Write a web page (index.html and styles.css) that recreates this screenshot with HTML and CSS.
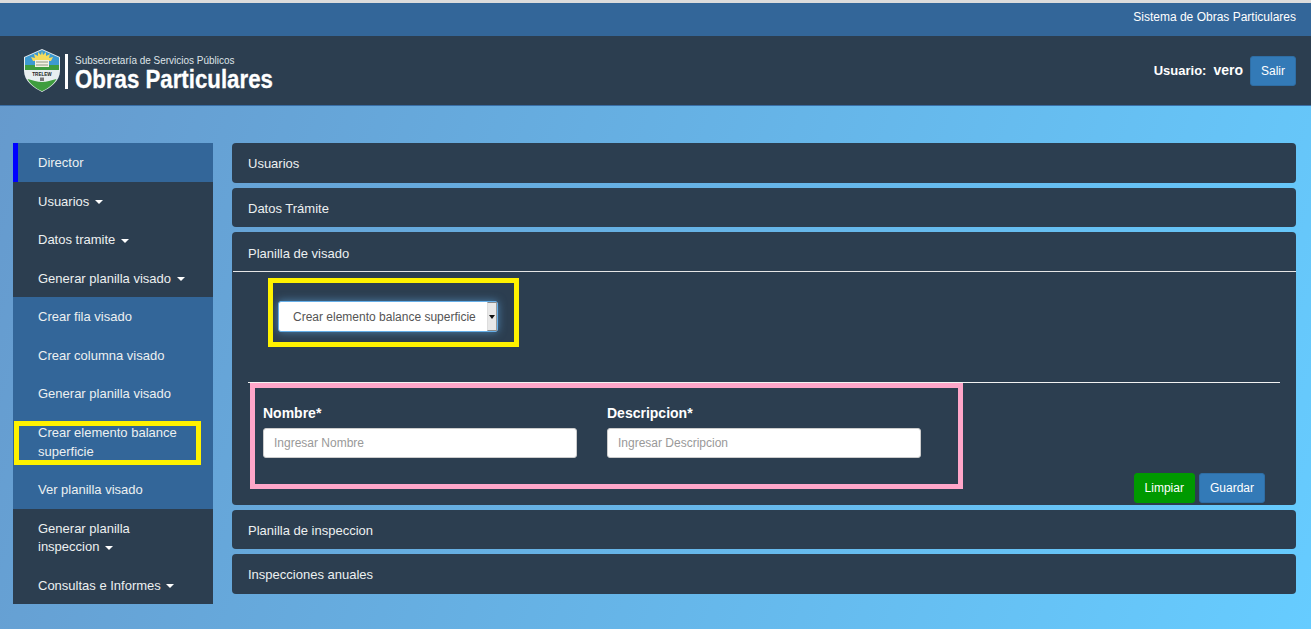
FILE: index.html
```html
<!DOCTYPE html>
<html lang="es">
<head>
<meta charset="utf-8">
<title>Sistema de Obras Particulares</title>
<link rel="stylesheet" href="styles.css">
</head>
<body>
<div class="topbar">Sistema de Obras Particulares</div>
<header class="header">
  <div class="brand">
    <svg class="shield" viewBox="0 0 36 43" aria-hidden="true">
      <path d="M0 8 L18 0 L36 8 V22 C36 32 26 39 18 43 C10 39 0 32 0 22 Z" fill="#e8eef0"/>
      <path d="M1 8.6 L18 1 L35 8.6 V16 H1 Z" fill="#3d9ad1"/>
      <circle cx="18" cy="13" r="7" fill="#f3d34a"/>
      <path d="M18 2 L19 6 L22 3 L22 7 L26 5 L25 9 L29 8 L27 12 H9 L7 8 L11 9 L10 5 L14 7 L14 3 L17 6 Z" fill="#f5dc5c"/>
      <path d="M1 16 H35 V21 H1 Z" fill="#3f9d3f"/>
      <path d="M11 11 H25 V18 H11 Z" fill="#f4f2e2"/>
      <path d="M12 13 H24 M12 16 H24" stroke="#77806a" stroke-width=".8"/>
      <text class="shield-text" x="18" y="26.6" text-anchor="middle">TRELEW</text>
      <path d="M16 28.5 H20 V32 H16 Z" fill="#777"/>
      <path d="M3.5 30 C9 31 13 33 18 33 C23 33 27 31 32.5 30 C29 36 23 40 18 42.3 C13 40 7 36 3.5 30 Z" fill="#3f9d3f"/>
    </svg>
    <span class="brand-rule"></span>
    <div class="brand-text">
      <div class="brand-sub">Subsecretaría de Servicios Públicos</div>
      <div class="brand-main">Obras Particulares</div>
    </div>
  </div>
  <div class="userbox">
    <span class="user-label">Usuario:</span>
    <span class="user-name">vero</span>
    <button class="btn btn-blue btn-salir">Salir</button>
  </div>
</header>
<main class="layout">
  <nav class="sidebar">
    <a class="nav-item nav-head">Director</a>
    <a class="nav-item">Usuarios <span class="caret"></span></a>
    <a class="nav-item">Datos tramite <span class="caret"></span></a>
    <a class="nav-item">Generar planilla visado <span class="caret"></span></a>
    <div class="submenu">
      <a class="nav-item">Crear fila visado</a>
      <a class="nav-item">Crear columna visado</a>
      <a class="nav-item">Generar planilla visado</a>
      <a class="nav-item nav-marked">Crear elemento balance superficie</a>
      <a class="nav-item">Ver planilla visado</a>
    </div>
    <a class="nav-item">Generar planilla inspeccion <span class="caret"></span></a>
    <a class="nav-item">Consultas e Informes <span class="caret"></span></a>
  </nav>
  <section class="panels">
    <div class="panel"><div class="panel-heading">Usuarios</div></div>
    <div class="panel"><div class="panel-heading">Datos Trámite</div></div>
    <div class="panel panel-open">
      <div class="panel-heading">Planilla de visado</div>
      <div class="panel-body">
        <div class="yellow-box">
          <div class="fake-select">
            <span class="fake-select-value">Crear elemento balance superficie</span>
            <span class="fake-select-arrow"></span>
          </div>
        </div>
        <hr class="rule">
        <div class="form-row">
          <form class="pink-box">
            <div class="field">
              <label class="field-label">Nombre*</label>
              <input class="field-input" type="text" placeholder="Ingresar Nombre">
            </div>
            <div class="field">
              <label class="field-label">Descripcion*</label>
              <input class="field-input" type="text" placeholder="Ingresar Descripcion">
            </div>
          </form>
          <div class="actions">
            <button class="btn btn-green">Limpiar</button>
            <button class="btn btn-blue">Guardar</button>
          </div>
        </div>
      </div>
    </div>
    <div class="panel"><div class="panel-heading">Planilla de inspeccion</div></div>
    <div class="panel"><div class="panel-heading">Inspecciones anuales</div></div>
  </section>
</main>
</body>
</html>
```
FILE: styles.css
```css
* { box-sizing: border-box; }
html, body { height: 100%; }
body {
  margin: 0;
  padding-top: 3px;
  overflow: hidden;
  font-family: "Liberation Sans", Arial, sans-serif;
  font-size: 13px;
  line-height: 1.42857;
  color: #ecf0f1;
  background: linear-gradient(#dcdcdc, #dcdcdc) top / 100% 3px no-repeat,
              linear-gradient(110deg, #6699cc 0%, #66ccff 100%);
}
.topbar {
  height: 33px;
  padding: 6px 15px 0;
  text-align: right;
  font-size: 12px;
  color: #fff;
  background: #336699;
}
.header {
  height: 70px;
  padding: 0 15px 0 24px;
  display: flex;
  align-items: center;
  justify-content: space-between;
  background: #2c3e50;
  border-bottom: 1px solid #3a6ea5;
}
.brand { display: flex; align-items: center; }
.shield { width: 36px; height: 43px; display: block; }
.shield-text { font-size: 4.6px; font-weight: 700; fill: #222; font-family: "Liberation Sans", sans-serif; }
.brand-rule { width: 3px; height: 35px; margin: 1px 7px 0 5px; background: #fff; }
.brand-text { width: 198px; margin-top: 3px; color: #fff; white-space: nowrap; }
.brand-sub {
  font-size: 11.5px;
  line-height: 13px;
  color: #dfe4e8;
  transform: scaleX(.866);
  transform-origin: left center;
}
.brand-main {
  font-size: 25px;
  font-weight: 700;
  line-height: 24px;
  -webkit-text-stroke: .3px #fff;
  transform: scaleX(.89);
  transform-origin: left center;
}
.userbox { display: flex; align-items: center; color: #fff; font-weight: 700; }
.user-label { margin: 2px 7px 0 0; }
.user-name { font-size: 14px; margin: 1px 7px 0 0; }
.btn {
  height: 30px;
  padding: 0 10px;
  font: 12px "Liberation Sans", Arial, sans-serif;
  color: #fff;
  border: 1px solid transparent;
  border-radius: 3px;
}
.btn-blue { background: #337ab7; border-color: #2e6da4; }
.btn-green { background: #009900; border-color: #009900; }
.btn-salir { width: 46px; padding: 0; }
.layout {
  display: flex;
  align-items: flex-start;
  gap: 19px;
  padding: 37px 15px 0 13px;
}
.sidebar { width: 200px; flex: none; background: #2c3e50; }
.nav-item {
  display: block;
  padding: 11px 25px 9px;
  color: #ecf0f1;
}
.nav-head {
  background: #336699;
  border-left: 5px solid #0000ff;
  padding-left: 20px;
}
.submenu { background: #336699; }
.nav-marked { position: relative; }
.nav-marked::after {
  content: "";
  box-sizing: border-box;
  position: absolute;
  left: 1px;
  top: 8px;
  width: 187px;
  height: 44px;
  border: 5px solid #fff200;
}
.caret {
  display: inline-block;
  width: 0;
  height: 0;
  margin-left: 2px;
  vertical-align: middle;
  border-top: 4px solid #fff;
  border-left: 4px solid transparent;
  border-right: 4px solid transparent;
}
.panels { flex: 1; min-width: 0; display: flex; flex-direction: column; gap: 5px; }
.panel { background: #2c3e50; border-radius: 4px; }
.panel-heading { padding: 12px 16px 9px; color: #ecf0f1; }
.panel-open .panel-heading { border-bottom: 1px solid #e6e6e6; margin-left: 1px; padding: 13px 15px 7px; }
.panel-body { padding: 0 16px 2px; }
.yellow-box {
  width: 251px;
  height: 69px;
  margin: 6px 0 0 20px;
  padding: 18px 0 0 5px;
  border: 5px solid #fff200;
}
.fake-select {
  width: 220px;
  height: 31px;
  display: flex;
  align-items: center;
  background: #fff;
  border: 1px solid #66afe9;
  border-radius: 3px;
  box-shadow: 0 0 8px rgba(102, 175, 233, .6);
  color: #555;
  font-size: 12px;
}
.fake-select-value { flex: 1; padding: 2px 0 0 14px; }
.fake-select-arrow {
  position: relative;
  width: 10px;
  height: 100%;
  background: #e8e8e8;
  border-left: 1px solid #ddd;
  border-right: 1px solid #999;
  border-top: 1px solid #888;
  border-bottom: 1px solid #888;
}
.fake-select-arrow::after {
  content: "";
  position: absolute;
  left: 1px;
  top: 12px;
  border-top: 4px solid #111;
  border-left: 3px solid transparent;
  border-right: 3px solid transparent;
}
.rule { height: 1px; margin: 35px 0 0; border: 0; background: #f2f2f2; }
.form-row { display: flex; align-items: flex-start; }
.pink-box {
  width: 713px;
  height: 106px;
  margin-left: 2px;
  padding: 15px 8px 0;
  display: flex;
  gap: 30px;
  border: 5px solid #ffa6c9;
}
.field { width: 314px; }
.field-label {
  display: block;
  margin-bottom: 5px;
  font-size: 14px;
  font-weight: 700;
  line-height: 20px;
  color: #fff;
}
.field-input {
  display: block;
  width: 100%;
  height: 30px;
  padding: 0 10px;
  font: 12px "Liberation Sans", Arial, sans-serif;
  background: #fff;
  border: 1px solid #ccc;
  border-radius: 3px;
}
.field-input::placeholder { color: #999; opacity: 1; }
.actions { display: flex; gap: 4px; margin: 90px 15px 0 auto; }
```
